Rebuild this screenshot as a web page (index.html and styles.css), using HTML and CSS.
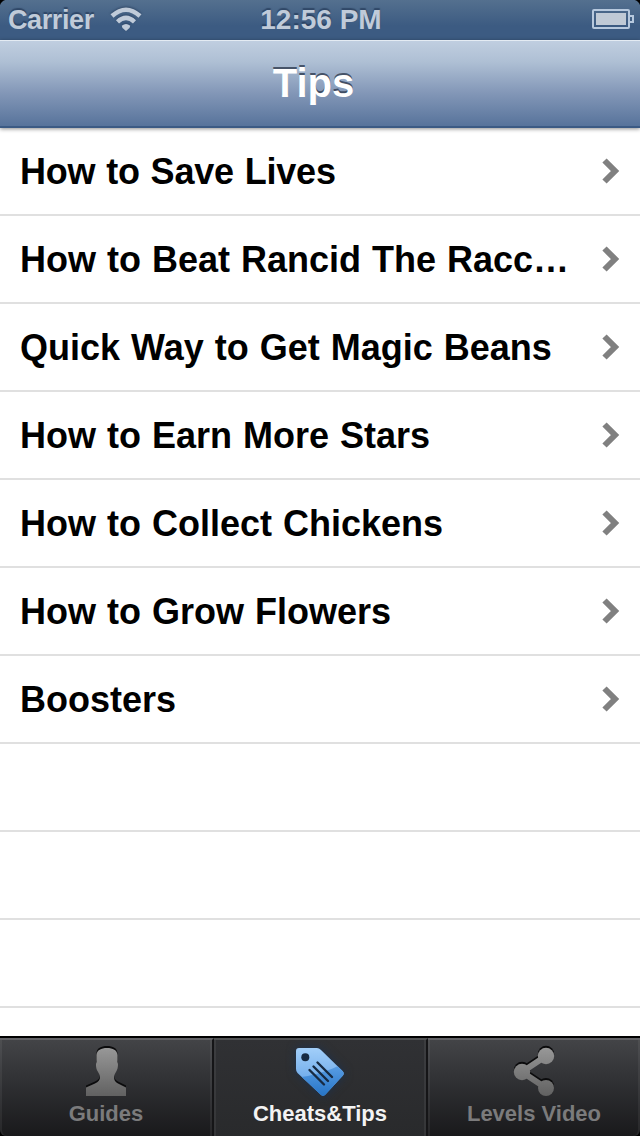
FILE: index.html
```html
<!DOCTYPE html>
<html lang="en">
<head>
    <meta charset="UTF-8">
    <meta name="viewport" content="width=device-width, initial-scale=1.0">
    <title>Tips</title>
    <link rel="stylesheet" href="styles.css">
</head>
<body>
    <div class="screen">
        <div class="status-bar">
            <div class="status-left">
                <span class="carrier">Carrier</span>
                <svg class="wifi" width="32" height="26" viewBox="0 0 32 26">
                    <path d="M2 9 Q16 -3.5 30 9" />
                    <path d="M7.5 14.8 Q16 7 24.5 14.8" />
                    <path class="wifi-dot" d="M11.7 18.8 Q16 15 20.3 18.8 L19.5 21 L16 24 L12.5 21 Z" />
                </svg>
            </div>
            <span class="clock">12:56 PM</span>
            <div class="status-right">
                <svg class="battery" width="42" height="22" viewBox="0 0 42 22">
                    <rect class="battery-frame" x="1" y="1" width="36" height="18" rx="1" />
                    <rect class="battery-fill" x="4" y="4" width="30" height="12" />
                    <path class="battery-frame" d="M37 7 h4 v6 h-4" />
                </svg>
            </div>
        </div>

        <header class="nav-bar">
            <h1>Tips</h1>
        </header>

        <ul class="list">
            <li class="row"><span class="row-title tight">How to Save Lives</span><svg class="chevron" width="20" height="28" viewBox="0 0 20 28"><path d="M3.5 3.500 L14 14 L3.500 24.500" /></svg></li>
            <li class="row"><span class="row-title">How to Beat Rancid The Racc…</span><svg class="chevron" width="20" height="28" viewBox="0 0 20 28"><path d="M3.5 3.500 L14 14 L3.500 24.500" /></svg></li>
            <li class="row"><span class="row-title">Quick Way to Get Magic Beans</span><svg class="chevron" width="20" height="28" viewBox="0 0 20 28"><path d="M3.5 3.500 L14 14 L3.500 24.500" /></svg></li>
            <li class="row"><span class="row-title">How to Earn More Stars</span><svg class="chevron" width="20" height="28" viewBox="0 0 20 28"><path d="M3.5 3.500 L14 14 L3.500 24.500" /></svg></li>
            <li class="row"><span class="row-title">How to Collect Chickens</span><svg class="chevron" width="20" height="28" viewBox="0 0 20 28"><path d="M3.5 3.500 L14 14 L3.500 24.500" /></svg></li>
            <li class="row"><span class="row-title">How to Grow Flowers</span><svg class="chevron" width="20" height="28" viewBox="0 0 20 28"><path d="M3.5 3.500 L14 14 L3.500 24.500" /></svg></li>
            <li class="row"><span class="row-title">Boosters</span><svg class="chevron" width="20" height="28" viewBox="0 0 20 28"><path d="M3.5 3.500 L14 14 L3.500 24.500" /></svg></li>
            <li class="row"></li>
            <li class="row"></li>
            <li class="row"></li>
        </ul>

        <nav class="tab-bar">
            <div class="tab">
                <svg class="tab-icon" width="60" height="56" viewBox="0 0 60 56">
                    <defs>
                        <linearGradient id="gray" gradientUnits="userSpaceOnUse" x1="0" y1="4" x2="0" y2="56">
                            <stop offset="0" stop-color="#9c9c9c" />
                            <stop offset="1" stop-color="#616161" />
                        </linearGradient>
                    </defs>
                    <path fill="url(#gray)" d="M31 8 C37 8 41 10 41.500 15 V22 C42.500 24 42 29 40.500 31 C39.500 33 38 35 38 37 C38 40 39 42 42 43.500 L50 47.500 V56 H10 V47.500 L19 43.500 C22.500 42 24 40 24 37 C24 35 22.500 33 21.500 31 C20 29 19.500 24 20.500 22 V15 C21 10 25 8 31 8 Z" />
                </svg>
                <span class="tab-label">Guides</span>
            </div>
            <div class="tab active">
                <svg class="tab-icon" width="60" height="56" viewBox="0 0 60 56">
                    <defs>
                        <linearGradient id="blue" gradientUnits="userSpaceOnUse" x1="0" y1="7" x2="0" y2="56">
                            <stop offset="0" stop-color="#a4d0fa" />
                            <stop offset="1" stop-color="#5699e2" />
                        </linearGradient>
                        <linearGradient id="blueLow" gradientUnits="userSpaceOnUse" x1="0" y1="25" x2="0" y2="56">
                            <stop offset="0" stop-color="#5b9fe5" />
                            <stop offset="1" stop-color="#2674c6" />
                        </linearGradient>
                        <clipPath id="tag">
                            <path d="M9 8 H27 Q29 8 31 10 L52.500 31 Q55 33.500 52.500 36 L35.500 54.500 Q33 57 30.500 54.500 L7.500 33 Q6 31.500 6 29 V11 Q6 8 9 8 Z" />
                        </clipPath>
                    </defs>
                    <g clip-path="url(#tag)">
                        <rect x="0" y="4" width="60" height="56" fill="url(#blue)" />
                        <path fill="url(#blueLow)" d="M0 38 Q30 37 60 20 V60 H0 Z" />
                    </g>
                    <circle cx="15.300" cy="17.200" r="4" fill="#172a42" />
                    <path class="tag-lines" d="M27.500 22.500 L42 37 M23.500 26.500 L38 41 M19.500 30 L34 44.500" />
                </svg>
                <span class="tab-label">Cheats&amp;Tips</span>
            </div>
            <div class="tab">
                <svg class="tab-icon" width="60" height="56" viewBox="0 0 60 56">
                    <path stroke="url(#gray)" stroke-width="6" fill="none" d="M42 16 L18 32 L42 48" />
                    <g fill="url(#gray)">
                        <circle cx="42" cy="16" r="8.200" />
                        <circle cx="18" cy="32" r="8.200" />
                        <circle cx="42" cy="48" r="8" />
                    </g>
                </svg>
                <span class="tab-label">Levels Video</span>
            </div>
        </nav>
    </div>
</body>
</html>
```
FILE: styles.css
```css
body {
    margin: 0;
    background-color: #000;
    font-family: "Liberation Sans", Arial, sans-serif;
    font-weight: bold;
}
.screen {
    display: flex;
    flex-direction: column;
    width: 640px;
    height: 1136px;
    overflow: hidden;
    background-color: #fff;
}
.status-bar {
    display: grid;
    grid-template-columns: 1fr auto 1fr;
    align-items: center;
    height: 40px;
    flex: none;
    color: #c0cbd9;
    font-size: 28px;
    line-height: 40px;
    text-shadow: 0 -2px 1px rgba(30, 50, 80, 0.6);
    background:
        radial-gradient(circle at 8px 8px, transparent 8px, #000 9px) 0 0 / 8px 8px no-repeat,
        radial-gradient(circle at 0 8px, transparent 8px, #000 9px) 100% 0 / 8px 8px no-repeat,
        linear-gradient(#54708f, #3c5b82 65%, #3c5b82);
}
.status-left {
    display: flex;
    align-items: center;
    gap: 16px;
    padding-left: 8px;
}
.carrier {
    width: 86px;
    font-size: 27px;
    letter-spacing: -0.4px;
}
.clock {
    padding-left: 2px;
}
.wifi {
    fill: none;
    stroke: #c0cbd9;
    stroke-width: 4.5;
    filter: drop-shadow(0 -1px 1px rgba(30, 50, 80, 0.6));
}
.wifi-dot {
    fill: #c0cbd9;
    stroke: none;
}
.status-right {
    display: flex;
    justify-content: flex-end;
    padding-right: 6px;
}
.battery-frame {
    fill: none;
    stroke: #b7c9de;
    stroke-width: 2;
}
.battery-fill {
    fill: #c0cad6;
}
.nav-bar {
    position: relative;
    z-index: 1;
    display: flex;
    align-items: center;
    justify-content: center;
    box-sizing: border-box;
    height: 88px;
    flex: none;
    padding: 0 13px 1px 0;
    border-top: 1px solid #e4ebf3;
    border-bottom: 2px solid #3b5a84;
    background: linear-gradient(#c0cee0, #aebfd4 25%, #8498b8 60%, #57739b);
    box-shadow: 0 1px 4px rgba(0, 0, 0, 0.45);
}
h1 {
    margin: 0;
    color: #fff;
    font-size: 40px;
    line-height: 82px;
    text-shadow: 0 -2px 0 rgba(40, 52, 72, 0.75);
}
.list {
    flex: 1;
    min-height: 0;
    overflow: hidden;
    margin: 0;
    padding: 0;
    list-style: none;
}
.row {
    display: flex;
    align-items: center;
    justify-content: space-between;
    box-sizing: border-box;
    height: 88px;
    padding: 0 19px 0 20px;
    border-bottom: 2px solid #e0e0e0;
    color: #000;
    font-size: 36px;
}
.row-title {
    padding-top: 2px;
    white-space: nowrap;
    word-spacing: 1px;
}
.row-title.tight {
    letter-spacing: -0.2px;
}
.chevron {
    fill: none;
    stroke: #808080;
    stroke-width: 6;
}
.tab-bar {
    display: grid;
    grid-template-columns: 214px 214px 212px;
    flex: none;
    box-sizing: border-box;
    height: 100px;
    border-top: 2px solid #000;
    background: #000;
}
.tab {
    display: flex;
    flex-direction: column;
    align-items: center;
    box-sizing: border-box;
    border-top: 2px solid #626266;
    border-right: 2px solid #151517;
    background: linear-gradient(#434447, #2f3033 45%, #19191b);
    box-shadow: inset 2px 0 0 rgba(255, 255, 255, 0.06), inset -2px 0 0 rgba(255, 255, 255, 0.06);
    color: #7b7b7c;
}
.tab:first-child {
    border-bottom-left-radius: 6px;
}
.tab:last-child {
    border-right: none;
    border-bottom-right-radius: 6px;
}
.tab.active {
    border-top-color: #515254;
    background: linear-gradient(#303134, #292a2c);
    color: #f3f3f3;
}
.tab-icon {
    filter: drop-shadow(0 -2px 0 #0b0b0c);
}
.active .tab-icon {
    filter: drop-shadow(0 0 5px rgba(20, 50, 90, 0.7));
}
.tag-lines {
    fill: none;
    stroke: #172a42;
    stroke-width: 2.4;
    stroke-linecap: round;
}
.tab-label {
    font-size: 22px;
    line-height: 36px;
}
```
